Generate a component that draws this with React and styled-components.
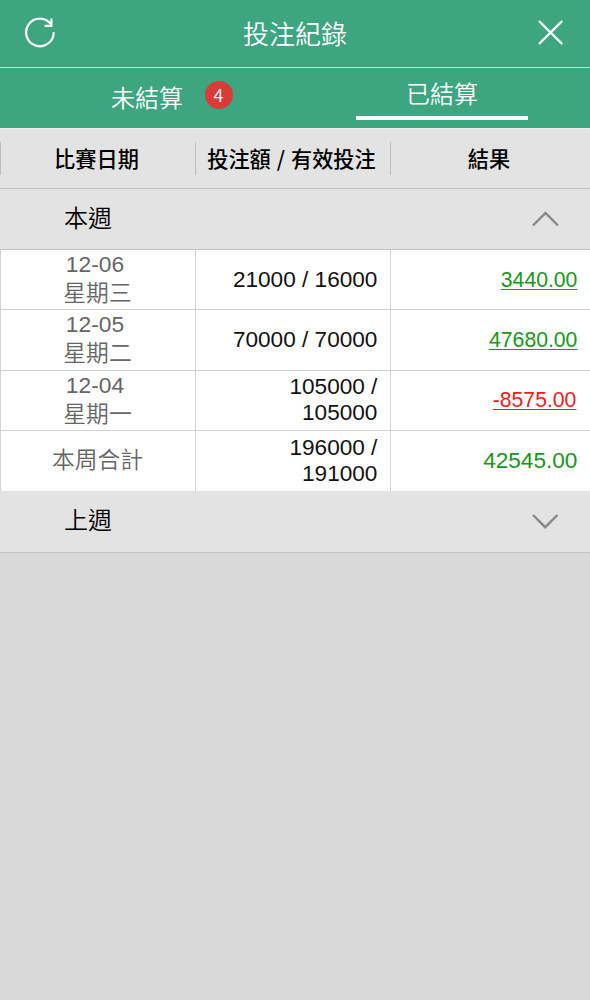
import React from "react"
import styled, { createGlobalStyle } from "styled-components"

const GlobalStyle = createGlobalStyle`
  * {
    box-sizing: border-box;
  }
  body {
    margin: 0;
    background: #d8d8d8;
    font-family: "Liberation Sans", "Noto Sans CJK TC", sans-serif;
  }
`

const Page = styled.div`
  min-height: 1000px;
  background: #d8d8d8;
`
const Header = styled.header`
  display: flex;
  align-items: center;
  justify-content: space-between;
  height: 68px;
  padding: 0 24px;
  background: #3da580;
  border-bottom: 1px solid #c3dbd1;

  h1 {
    margin: 3px 0 0;
    color: #fff;
    font-size: 26px;
    line-height: 36px;
    font-weight: 350;
  }
`
const IconButton = styled.button`
  display: flex;
  width: 32px;
  height: 32px;
  margin-bottom: 2px;
  padding: 0;
  border: 0;
  background: none;
`
const Tabs = styled.nav`
  display: flex;
  height: 60px;
  padding: 0 62px;
  background: #3da580;
`
const Tab = styled.div`
  display: flex;
  align-items: center;
  justify-content: ${(props) => (props.$active ? "center" : "flex-start")};
  width: ${(props) => (props.$active ? "172px" : "294px")};
  height: 52px;
  padding: ${(props) => (props.$active ? "5px 0 0" : "10px 0 0 49px")};
  border-bottom: ${(props) => (props.$active ? "4px solid #fff" : "0")};
  color: #fff;
  font-size: 24px;
  line-height: 32px;
  font-weight: 350;
`
const Badge = styled.span`
  width: 28px;
  height: 28px;
  margin: -8px 0 0 22px;
  padding-right: 1px;
  border-radius: 50%;
  background: #d93c37;
  font-family: "Noto Sans CJK TC", sans-serif;
  font-size: 18px;
  line-height: 26px;
  font-weight: 350;
  text-align: center;
`
const Columns = styled.div`
  display: grid;
  grid-template-columns: 195px 195px 200px;
`
const HeadRow = styled(Columns)`
  align-items: center;
  height: 61px;
  background: #e3e3e3;
  border-top: 1px solid #e8efec;
  border-bottom: 1px solid #bfbfbf;
`
const HeadCell = styled.div`
  height: 33px;
  padding-right: 3px;
  border-left: 1px solid #bdbdbd;
  font-family: "Noto Sans CJK TC", sans-serif;
  font-size: 21.2px;
  line-height: 31px;
  font-weight: 500;
  text-align: center;
  white-space: nowrap;
  word-spacing: 1.2px;
`
const WeekBar = styled.div`
  display: flex;
  align-items: center;
  justify-content: space-between;
  height: ${(props) => (props.$open ? "61px" : "61.4px")};
  padding: 0 31px 0 64px;
  background: #e3e3e3;
  border-bottom: 1px solid #c4c4c4;
  font-size: 24px;
  line-height: 32px;
  font-weight: 350;

  svg {
    margin-bottom: 1px;
  }
`
const Row = styled(Columns)`
  height: 60.3px;
  background: #fff;
  border-bottom: ${(props) => (props.$last ? "0" : "1px solid #d2d2d2")};
`
const Cell = styled.div`
  display: flex;
  flex-direction: column;
  justify-content: center;
  align-items: flex-end;
  padding: 0 12.6px 0 28px;
  border-left: 1px solid #d2d2d2;
  color: #111;
  font-size: 22.6px;
  line-height: 26px;
  text-align: right;
`
const DateCell = styled(Cell)`
  align-items: center;
  padding: 0 1px 2px 0;
  color: #666;
  font-size: 22.8px;
  line-height: 28px;
  font-weight: 350;
  white-space: nowrap;
`
const DateText = styled.span`
  margin-bottom: 1px;
  padding-right: 5px;
`
const Result = styled.span`
  margin-right: ${(props) => (props.$loss ? "1px" : "0")};
  color: ${(props) => (props.$loss ? "#ee1c1c" : "#16991a")};
  font-size: ${(props) => (props.$total ? "22.6px" : "21.2px")};
  text-decoration: ${(props) => (props.$total ? "none" : "underline")};
  text-decoration-thickness: 1px;
  text-underline-offset: 2px;
`

const rows = [
  { date: "12-06", day: "星期三", bets: "21000 / 16000", result: "3440.00" },
  { date: "12-05", day: "星期二", bets: "70000 / 70000", result: "47680.00" },
  { date: "12-04", day: "星期一", bets: "105000 / 105000", result: "-8575.00" },
  { day: "本周合計", bets: "196000 / 191000", result: "42545.00", total: true },
]

function RefreshIcon() {
  return (
    <svg width="32" height="32" fill="none" stroke="#fff" strokeWidth="2.2">
      <path d="M29.7 15.2A13.8 13.8 0 1 1 27 7.2" />
      <path d="M27.4 1.6V8.8H20.6" />
    </svg>
  )
}

function CloseIcon() {
  return (
    <svg width="32" height="32" fill="none" stroke="#fff" strokeWidth="2.2" strokeLinecap="round">
      <path d="M5.6 4.6L27.6 26.4M27.6 4.6L5.6 26.4" />
    </svg>
  )
}

function Chevron({ up }) {
  return (
    <svg width="28" height="18" fill="none" stroke="#888" strokeWidth="2.4">
      <path d={up ? "M2 15.5L14.5 3L27 15.5" : "M2 3L14.2 15.2L26.4 3"} />
    </svg>
  )
}

export default function App() {
  return (
    <Page>
      <GlobalStyle />
      <Header>
        <IconButton>
          <RefreshIcon />
        </IconButton>
        <h1>投注紀錄</h1>
        <IconButton>
          <CloseIcon />
        </IconButton>
      </Header>
      <Tabs>
        <Tab>
          未結算
          <Badge>4</Badge>
        </Tab>
        <Tab $active>已結算</Tab>
      </Tabs>
      <HeadRow>
        <HeadCell>比賽日期</HeadCell>
        <HeadCell>投注額 / 有效投注</HeadCell>
        <HeadCell>結果</HeadCell>
      </HeadRow>
      <WeekBar $open>
        本週
        <Chevron up />
      </WeekBar>
      {rows.map((row) => (
        <Row key={row.day} $last={row.total}>
          <DateCell>
            {row.date && <DateText>{row.date}</DateText>}
            <span>{row.day}</span>
          </DateCell>
          <Cell>{row.bets}</Cell>
          <Cell>
            <Result $loss={row.result.startsWith("-")} $total={row.total}>
              {row.result}
            </Result>
          </Cell>
        </Row>
      ))}
      <WeekBar>
        上週
        <Chevron />
      </WeekBar>
    </Page>
  )
}
